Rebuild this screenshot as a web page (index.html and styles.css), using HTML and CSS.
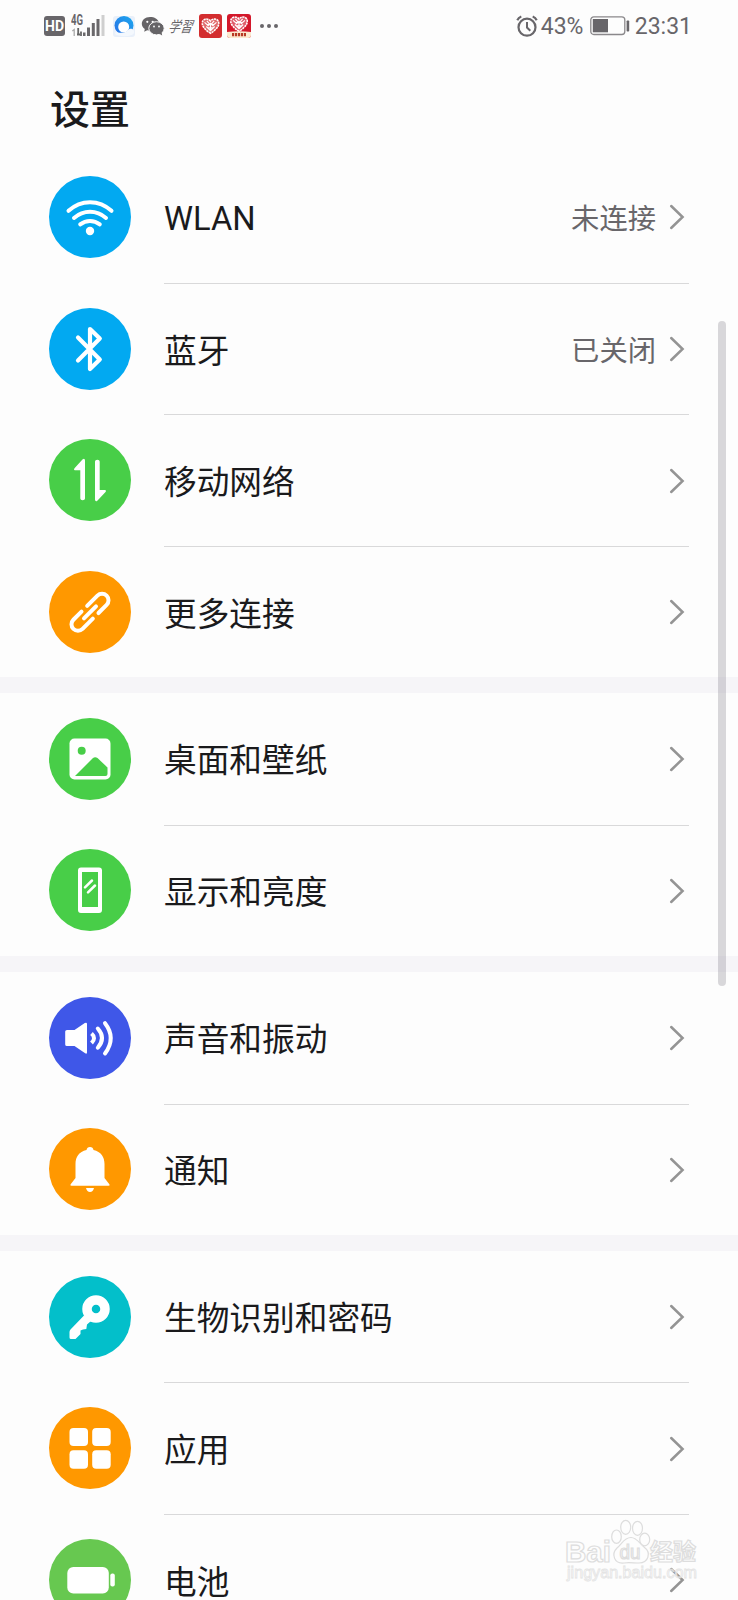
FILE: index.html
```
<!DOCTYPE html>
<html lang="zh-CN">
<head>
  <meta charset="UTF-8">
  <meta name="viewport" content="width=device-width, initial-scale=1.0">
  <title>设置</title>
  <link rel="stylesheet" href="styles.css">
</head>
<body>
  <!-- shared symbols -->
  <svg class="defs" width="0" height="0">
    <symbol id="chevron" viewBox="0 0 18 28">
      <path d="M3.2 3 L14.6 14 L3.2 25" fill="none" stroke="#949494" stroke-width="2.5" stroke-linecap="round" stroke-linejoin="miter"/>
    </symbol>
    <symbol id="heart" viewBox="0 0 24 24">
      <path d="M12 20 C8 17.5 3 13.5 3 9 C3 4 9 3 12 6.5 C15 3 21 4 21 9 C21 13.5 16 17.5 12 20Z" fill="#fff" fill-opacity=".3" stroke="#fff" stroke-width="1.7" stroke-dasharray="2.4 .7"/>
      <path d="M5.5 8 L10 12 M18.5 8 L14 12 M8 6.5 L12 11 L16 6.5 M7.5 12.5 L12 17 L16.5 12.5 M12 8.5 V16 M9 10.5 H15 M9 14 H15" fill="none" stroke="#fff" stroke-width="1.3"/>
    </symbol>
  </svg>

  <div class="screen">
    <header class="statusbar">
      <div class="status-left">
        <span class="hd">HD</span>
        <svg class="signal" width="36" height="24" viewBox="0 0 36 24">
          <text class="signal-text" x="0" y="10.5" textLength="12" lengthAdjust="spacingAndGlyphs">4G</text>
          <path d="M1.3 17 L3.2 15.5 V22" stroke="#aaa" stroke-width="1.3" fill="none"/>
          <path d="M7.2 14 V21.5 M6 20.5 H9 M10 17.5 V22" stroke="#666" stroke-width="1.8" fill="none"/>
          <g fill="#6a686b">
            <rect x="12" y="18.5" width="2.5" height="3.5"/>
            <rect x="16" y="13.5" width="3" height="8.5"/>
            <rect x="20.8" y="9" width="3" height="13"/>
            <rect x="25.5" y="5" width="3" height="17"/>
          </g>
          <rect x="30.5" y="1" width="3" height="21" fill="#cfcfcf"/>
        </svg>
        <svg class="browser" width="24" height="24" viewBox="0 0 24 24">
          <defs>
            <linearGradient id="sky" x1="1" y1="0" x2="0" y2="1">
              <stop offset="0" stop-color="#1ca9ee"/><stop offset="1" stop-color="#2a6fe6"/>
            </linearGradient>
          </defs>
          <rect x="1" y="2" width="22" height="21" rx="3" fill="#e9f0fa"/>
          <circle cx="12" cy="11.5" r="9.5" fill="url(#sky)"/>
          <circle cx="11.700" cy="13" r="5.5" fill="#fff"/>
          <path d="M3 20 C7 23 20 23 22 19 C23 15 18 13 15.5 16.5 C13 19 7 20 4 17Z" fill="#f4f8fd"/>
        </svg>
        <svg class="wechat" width="24" height="24" viewBox="0 0 24 24">
          <path d="M9 3 C4 3 .8 6 .8 9.8 C.8 12 2 13.8 3.8 15 L3.2 17.8 L6.2 16.2 C8 16.7 9 16.6 10 16.5 L18 8.5 C17 5 13.5 3 9 3Z" fill="#666467"/>
          <ellipse cx="15.5" cy="14.3" rx="7.7" ry="6.6" fill="#666467" stroke="#fdfdfd" stroke-width="1"/>
          <path d="M18 19.5 L21.2 21.5 L20.5 18Z" fill="#666467"/>
          <g fill="#fdfdfd">
            <circle cx="6.3" cy="7.8" r="1.1"/><circle cx="11.7" cy="7.8" r="1.1"/>
            <circle cx="13" cy="12.5" r=".9"/><circle cx="18" cy="12.5" r=".9"/>
          </g>
        </svg>
        <span class="study">学習</span>
        <svg class="app" width="23" height="24" viewBox="0 0 23 24">
          <rect width="23" height="24" rx="3" fill="#d32d2f"/>
          <use href="#heart" x="0.5" y="1" width="22" height="22"/>
        </svg>
        <svg class="app" width="24" height="24" viewBox="0 0 24 24">
          <rect width="24" height="24" rx="3" fill="#d3182b"/>
          <use href="#heart" x="0" y="-1" width="24" height="22"/>
          <path d="M0 18 Q12 16.5 24 18 V21 Q24 24 21 24 H3 Q0 24 0 21Z" fill="#fbe9cf"/>
          <path d="M5 20.7 H19" stroke="#b73a24" stroke-width="3.2" stroke-dasharray="2.2 .8"/>
        </svg>
        <span class="more"><i></i><i></i><i></i></span>
      </div>
      <div class="status-right">
        <svg class="alarm" width="22" height="24" viewBox="0 0 22 24">
          <g fill="none" stroke="#68666a">
            <circle cx="11" cy="13.2" r="8.5" stroke-width="2.2"/>
            <path d="M11 8 V13.5 L14.3 16.8" stroke-width="2"/>
            <path d="M1.3 6.2 Q2.5 3.5 5.3 2.5 M20.7 6.2 Q19.5 3.5 16.7 2.5" stroke-width="2.2"/>
          </g>
        </svg>
        <span class="percent">43%</span>
        <svg class="battery" width="40" height="20" viewBox="0 0 40 20">
          <rect x=".8" y=".8" width="34" height="17.7" rx="3" fill="none" stroke="#8a888b" stroke-width="1.3"/>
          <rect x="2.8" y="3" width="15.2" height="13.3" fill="#68666a"/>
          <rect x="36.6" y="4.5" width="2.6" height="11" rx=".8" fill="#68666a"/>
        </svg>
        <span class="time">23:31</span>
      </div>
    </header>

    <h1>设置</h1>

    <section class="group">
      <div class="row">
        <svg class="icon" viewBox="0 0 82 82">
          <circle cx="41" cy="41" r="41" fill="#02a9f1"/>
          <g fill="none" stroke="#fff" stroke-width="4" stroke-linecap="round">
            <path d="M19.5 34.8 C32 23.3 50 23.3 62.5 34.8"/>
            <path d="M25 42 C34.5 33.8 47.5 33.8 57 42"/>
            <path d="M31.2 48.3 C37 43.8 45 43.8 50.8 48.3"/>
          </g>
          <circle cx="41" cy="55" r="4.2" fill="#fff"/>
        </svg>
        <div class="content">
          <span class="label latin">WLAN</span>
          <span class="value">未连接</span>
          <svg class="chevron"><use href="#chevron"/></svg>
        </div>
      </div>
      <div class="row">
        <svg class="icon" viewBox="0 0 82 82">
          <circle cx="41" cy="41" r="41" fill="#02a9f1"/>
          <path d="M29 29.5 L50.8 51.5 L41 61 V21 L50.8 30.5 L29 52.5" fill="none" stroke="#fff" stroke-width="4.2" stroke-linecap="round" stroke-linejoin="round"/>
        </svg>
        <div class="content">
          <span class="label">蓝牙</span>
          <span class="value">已关闭</span>
          <svg class="chevron"><use href="#chevron"/></svg>
        </div>
      </div>
      <div class="row">
        <svg class="icon" viewBox="0 0 82 82">
          <circle cx="41" cy="41" r="41" fill="#48ce48"/>
          <path d="M36 21.5 V59.5 Q36 61.3 33.7 61.3 Q31.3 61.3 31.3 59.5 V31.3 H25.7 Q24.3 30.5 25.5 29.2 L33.7 20.3 Q35.8 18.8 36 21.5Z" fill="#fff"/>
          <path d="M46 60.5 V22.5 Q46 20.7 48.3 20.7 Q50.7 20.7 50.7 22.5 V51 H56.3 Q57.7 51.8 56.5 53 L48.3 61.7 Q46.2 63.2 46 60.5Z" fill="#fff"/>
        </svg>
        <div class="content">
          <span class="label">移动网络</span>
          <svg class="chevron"><use href="#chevron"/></svg>
        </div>
      </div>
      <div class="row">
        <svg class="icon" viewBox="0 0 82 82">
          <circle cx="41" cy="41" r="41" fill="#ff9800"/>
          <g transform="translate(41 41.3) rotate(-45)" fill="none" stroke="#fff" stroke-width="4" stroke-linecap="round">
            <path d="M2.5 -6.5 H17 A6.500 6.500 0 0 1 17 6.5 H5.5"/>
            <path d="M-2.5 6.5 H-17 A6.500 6.500 0 0 1 -17 -6.5 H-5.5"/>
            <path d="M-8.5 0 H8.5"/>
          </g>
        </svg>
        <div class="content">
          <span class="label">更多连接</span>
          <svg class="chevron"><use href="#chevron"/></svg>
        </div>
      </div>
    </section>

    <section class="group">
      <div class="row">
        <svg class="icon" viewBox="0 0 82 82">
          <circle cx="41" cy="41" r="41" fill="#48ce48"/>
          <rect x="20.5" y="20.5" width="41" height="41" rx="5" fill="#fff"/>
          <circle cx="32.7" cy="32.8" r="4" fill="#48ce48"/>
          <path d="M26 58 L43.5 40.5 Q46 38.2 48.5 40 L58.5 49.5 V56 Q58.5 58 56.5 58Z" fill="#48ce48"/>
        </svg>
        <div class="content">
          <span class="label">桌面和壁纸</span>
          <svg class="chevron"><use href="#chevron"/></svg>
        </div>
      </div>
      <div class="row">
        <svg class="icon" viewBox="0 0 82 82">
          <circle cx="41" cy="41" r="41" fill="#48ce48"/>
          <path fill-rule="evenodd" d="M32 18.5 H50 Q53 18.5 53 21.5 V61 Q53 64 50 64 H32 Q29 64 29 61 V21.5 Q29 18.5 32 18.5Z M33 23 V58 H49 V23Z" fill="#fff"/>
          <path d="M36 38.3 L43 31.5 M39 43.3 L46 36.5" stroke="#fff" stroke-width="2.5" stroke-linecap="round"/>
        </svg>
        <div class="content">
          <span class="label">显示和亮度</span>
          <svg class="chevron"><use href="#chevron"/></svg>
        </div>
      </div>
    </section>

    <section class="group">
      <div class="row">
        <svg class="icon" viewBox="0 0 82 82">
          <circle cx="41" cy="41" r="41" fill="#3f57e8"/>
          <path d="M18 33 H25.5 L35.8 26 Q38 25 38 27 V55.5 Q38 57.5 35.8 56 L25.5 49 H18 Q16.2 49 16.2 47.5 V34.5 Q16.2 33 18 33Z" fill="#fff"/>
          <g fill="none" stroke="#fff" stroke-width="4" stroke-linecap="round">
            <path d="M42.500 36.500 Q47.500 41 42.500 46" stroke-linecap="butt"/>
            <path d="M48.8 31.5 Q57.2 41 48.8 50.7"/>
            <path d="M56 26.2 Q67.5 41 56 56.5"/>
          </g>
        </svg>
        <div class="content">
          <span class="label">声音和振动</span>
          <svg class="chevron"><use href="#chevron"/></svg>
        </div>
      </div>
      <div class="row">
        <svg class="icon" viewBox="0 0 82 82">
          <circle cx="41" cy="41" r="41" fill="#ff9800"/>
          <path d="M41 19 Q44 19 44.5 22 C52 23.8 55.5 29 55.5 36 V50 L60.5 56.5 Q61 57.8 59.5 57.8 H22.5 Q21 57.8 21.5 56.5 L26.5 50 V36 C26.5 29 30 23.8 37.5 22 Q38 19 41 19Z" fill="#fff"/>
          <path d="M37 60 H45 Q44 64 41 64 Q38 64 37 60Z" fill="#fff"/>
        </svg>
        <div class="content">
          <span class="label">通知</span>
          <svg class="chevron"><use href="#chevron"/></svg>
        </div>
      </div>
    </section>

    <section class="group">
      <div class="row">
        <svg class="icon" viewBox="0 0 82 82">
          <circle cx="41" cy="41" r="41" fill="#03bfca"/>
          <circle cx="47" cy="33" r="9" fill="none" stroke="#fff" stroke-width="9.5"/>
          <path d="M35 39.5 L21.5 53.5 Q20.5 54.5 20.5 56 V61.5 Q20.5 63 22 63 H26.5 L31.5 58 V54.5 L34 53.5 L37.3 53 L38 48.5 L42 45Z" fill="#fff"/>
        </svg>
        <div class="content">
          <span class="label">生物识别和密码</span>
          <svg class="chevron"><use href="#chevron"/></svg>
        </div>
      </div>
      <div class="row">
        <svg class="icon" viewBox="0 0 82 82">
          <circle cx="41" cy="41" r="41" fill="#ff9800"/>
          <g fill="#fff">
            <rect x="20.5" y="21" width="18.5" height="18" rx="4"/>
            <rect x="43.2" y="21" width="18.5" height="18" rx="4"/>
            <rect x="20.5" y="43.2" width="18.5" height="18.5" rx="4"/>
            <rect x="43.2" y="43.2" width="18.5" height="18.5" rx="4"/>
          </g>
        </svg>
        <div class="content">
          <span class="label">应用</span>
          <svg class="chevron"><use href="#chevron"/></svg>
        </div>
      </div>
      <div class="row">
        <svg class="icon" viewBox="0 0 82 82">
          <circle cx="41" cy="41" r="41" fill="#67c850"/>
          <rect x="18.3" y="28" width="41.5" height="26.5" rx="6" fill="#fff"/>
          <rect x="61.3" y="34.5" width="4.5" height="13" rx="2" fill="#fff"/>
        </svg>
        <div class="content">
          <span class="label">电池</span>
          <svg class="chevron"><use href="#chevron"/></svg>
        </div>
      </div>
    </section>

    <div class="scrollbar"></div>

    <svg class="watermark" width="140" height="85" viewBox="0 0 140 85">
      <g fill="#fdfdfd" stroke="#d8d8d8" stroke-width="1.2">
        <path d="M70 27.500 C76 27.500 79 34 83 37 C91 43 87 53 78 53 C73 53 67 52 63 53 C53 54 50 44 56 38 C61 34 63 27.500 70 27.500Z"/>
        <ellipse cx="55.5" cy="26.7" rx="4.8" ry="6.7"/>
        <ellipse cx="64.7" cy="17.3" rx="5" ry="7"/>
        <ellipse cx="76.5" cy="18.3" rx="5" ry="7"/>
        <ellipse cx="83.7" cy="29.5" rx="5" ry="6.3"/>
        <text class="wm-latin" x="4" y="52" textLength="46" lengthAdjust="spacingAndGlyphs">Bai</text>
        <text class="wm-du" x="58.5" y="48.5" textLength="21" lengthAdjust="spacingAndGlyphs">du</text>
        <text class="wm-cjk" x="89" y="50" textLength="46" lengthAdjust="spacingAndGlyphs">经验</text>
      </g>
      <text class="wm-url" x="6" y="68" textLength="130" lengthAdjust="spacingAndGlyphs">jingyan.baidu.com</text>
    </svg>
  </div>
</body>
</html>
```
FILE: styles.css
```
* {
  box-sizing: border-box;
}
body {
  margin: 0;
  background-color: #fdfdfd;
  color: #1a1a1c;
  font-family: Roboto, "Noto Sans CJK SC", sans-serif;
}
.defs {
  position: absolute;
}
.screen {
  position: relative;
  width: 738px;
  height: 1600px;
  overflow: hidden;
}

/* status bar */
.statusbar {
  display: flex;
  justify-content: space-between;
  height: 52px;
  padding: 0 46px 0 44px;
  color: #68666a;
}
.status-left,
.status-right {
  display: flex;
  align-items: center;
}
.hd {
  width: 21px;
  height: 20px;
  margin-right: 7px;
  border-radius: 3px;
  background-color: #68666a;
  color: #fff;
  font-size: 14px;
  font-weight: 700;
  line-height: 21px;
  text-align: center;
}
.signal {
  margin-left: -1px;
}
.signal-text {
  font-size: 14px;
  font-weight: 700;
  fill: #68666a;
}
.browser {
  margin-left: 5px;
}
.wechat {
  margin-left: 5px;
}
.study {
  width: 24px;
  margin-left: 5px;
  font-family: "Noto Sans CJK SC", sans-serif;
  font-size: 12px;
  line-height: 24px;
  white-space: nowrap;
  transform: skewX(-20deg) scaleY(1.25);
}
.app {
  margin-left: 5px;
}
.more {
  display: flex;
  gap: 3px;
  margin-left: 9px;
}
.more i {
  width: 4px;
  height: 4px;
  border-radius: 50%;
  background-color: #68666a;
}
.status-right {
  font-size: 23px;
}
.percent {
  width: 42px;
  margin-left: 3px;
}
.battery {
  margin: 0 5px 0 7px;
}

h1 {
  height: 99.5px;
  margin: 0;
  padding-left: 50px;
  font-size: 40px;
  font-weight: 500;
  line-height: 117px;
}

/* settings list */
.group + .group {
  border-top: 16px solid #f6f5f8;
}
.row {
  display: flex;
  align-items: center;
  height: 131.45px;
  padding: 0 49px;
}
.icon {
  flex: none;
  width: 82px;
  height: 82px;
}
.content {
  display: flex;
  flex: 1;
  align-items: center;
  height: 100%;
  margin-left: 33px;
}
.row + .row .content {
  border-top: 1px solid #d9d9da;
}
.label {
  flex: 1;
  padding-bottom: 2px;
  font-size: 32.7px;
}
.latin {
  padding: 3px 0 0;
}
.value {
  margin-right: 12px;
  padding-bottom: 2px;
  color: #68666a;
  font-size: 28.3px;
}
.chevron {
  width: 18px;
  height: 28px;
  margin-right: 3px;
}

.scrollbar {
  position: absolute;
  top: 321px;
  right: 12px;
  width: 8px;
  height: 665px;
  border-radius: 4px;
  background-color: rgba(120, 116, 124, 0.27);
}

/* watermark over the last row */
.watermark {
  position: absolute;
  top: 1510px;
  left: 561px;
  opacity: 0.85;
}
.wm-latin {
  font-family: "Liberation Sans", sans-serif;
  font-size: 30px;
  font-weight: 700;
}
.wm-du {
  font-family: "Liberation Sans", sans-serif;
  font-size: 20px;
}
.wm-cjk {
  font-family: "Noto Sans CJK SC", sans-serif;
  font-size: 23px;
  font-weight: 700;
}
.wm-url {
  font-family: "Liberation Sans", sans-serif;
  font-size: 16px;
  fill: #fdfdfd;
  stroke: #e0e0e0;
  stroke-width: 0.8px;
}
```
